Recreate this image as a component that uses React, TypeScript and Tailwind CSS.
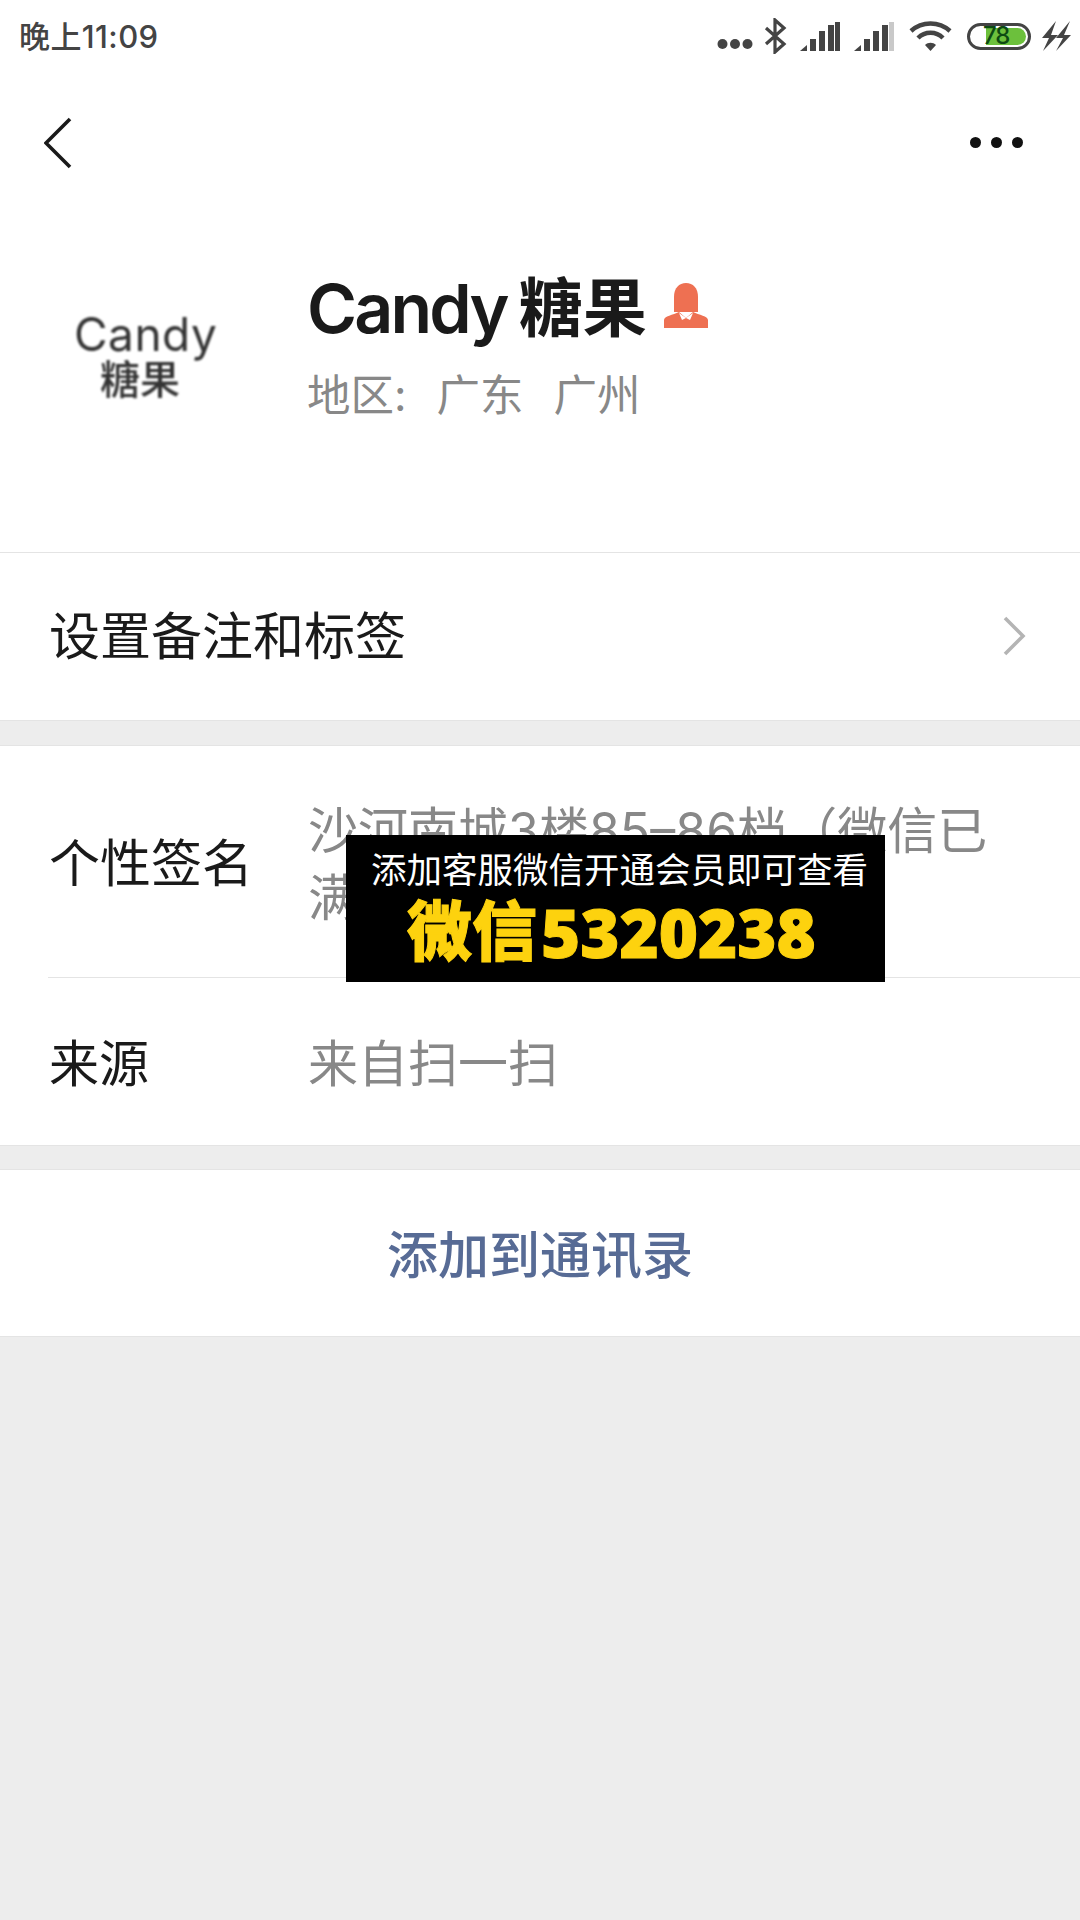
const FONT = "font-['Inter','Noto_Sans_CJK_SC',sans-serif]";

function SignalBars({ lastDim }: { lastDim?: boolean }) {
  return (
    <svg width="40" height="29" viewBox="0 0 40 29">
      <path d="M0 29 L7 23 V29 Z" fill="#444" />
      <rect x="10" y="17" width="6" height="12" fill="#444" />
      <rect x="19" y="9" width="6" height="20" fill="#444" />
      <rect x="28" y="3" width="6" height="26" fill="#444" />
      <rect x="35" y="0" width="5" height="29" fill={lastDim ? '#c9c9c9' : '#444'} />
    </svg>
  );
}

function StatusBar() {
  return (
    <div className="flex h-[72px] items-center justify-between pl-[19px] pr-[9px]">
      <span className="text-[31px] font-medium leading-none tracking-[0.4px] text-[#444]">晚上11:09</span>
      <div className="flex items-center">
        <svg width="36" height="12" viewBox="0 0 36 12" className="mt-[15px]">
          <circle cx="5.5" cy="6" r="5" fill="#444" />
          <circle cx="18" cy="6" r="5" fill="#444" />
          <circle cx="30.5" cy="6" r="5" fill="#444" />
        </svg>
        <svg width="24" height="36" viewBox="0 0 24 36" className="ml-[11px]">
          <path d="M2 10 L20 26 L11 34 V2 L20 10 L2 26" fill="none" stroke="#444" strokeWidth="3.2" />
        </svg>
        <div className="ml-[12px] flex items-center gap-[14px]">
          <SignalBars />
          <SignalBars lastDim />
        </div>
        <svg width="43" height="32" viewBox="0 0 43 32" className="ml-[15px]">
          <path d="M2 11 C13 1 30 1 41 11" fill="none" stroke="#444" strokeWidth="4.5" />
          <path d="M9 18 C16 11 27 11 34 18" fill="none" stroke="#444" strokeWidth="4.5" />
          <path d="M16 25 C19 22 24 22 27 25 L21.5 31 Z" fill="#444" />
        </svg>
        <div className="relative ml-[15px] h-[27px] w-[64px] rounded-full border-[3.5px] border-[#444] p-[2px]">
          <div className="ml-[14px] h-full rounded-r-full bg-[#6cc03c]" />
          <span className="absolute inset-y-0 left-[13px] flex items-center text-[24px] font-medium leading-none tracking-[-1px] text-[#0d4a12]">78</span>
        </div>
        <svg width="30" height="32" viewBox="0 0 30 32" className="ml-[10px]">
          <path d="M15 1 L1 18 L8 18 L2 31 L17 15 L10 15 Z" fill="#444" />
          <path d="M29 1 L15 18 L22 18 L15 31 L30 15 L23 15 Z" fill="#444" />
        </svg>
      </div>
    </div>
  );
}

function NavBar() {
  return (
    <div className="flex h-[142px] items-center justify-between pb-[1px] pl-[44px] pr-[57px]">
      <svg width="28" height="52" viewBox="0 0 28 52">
        <path d="M26 2 L2 26 L26 50" fill="none" stroke="#1a1a1a" strokeWidth="3.6" />
      </svg>
      <div className="flex gap-[10px]">
        <span className="size-[11px] rounded-full bg-[#111]" />
        <span className="size-[11px] rounded-full bg-[#111]" />
        <span className="size-[11px] rounded-full bg-[#111]" />
      </div>
    </div>
  );
}

function FemaleIcon() {
  return (
    <svg width="44" height="46" viewBox="0 0 44 46" className="ml-[17px] mt-[-6px]">
      <path d="M10 30 V15 C10 6 15 1 22 1 C29 1 34 6 34 15 V30 Z" fill="#ee7052" />
      <path d="M0 46 V38 C0 34 9 33 15 30 L22 36 L29 30 C35 33 44 34 44 38 V46 Z" fill="#ee7052" />
      <path d="M15 31 L22 36 L29 31 L26 38 L22 36 L18 38 Z" fill="#fff" />
    </svg>
  );
}

function Profile() {
  return (
    <div className="flex h-[339px] items-start border-b border-[#e4e4e4] pl-[74px]">
      <div className="mt-[96px] flex w-[233px] shrink-0 flex-col text-[#333] blur-[1.2px]">
        <span className="text-[46px] leading-[48px] tracking-[0.5px]">Candy</span>
        <span className="ml-[26px] mt-[1px] text-[40px] font-medium leading-[42px]">糖果</span>
      </div>
      <div className="mt-[54px] flex flex-col">
        <div className="flex items-center">
          <span className="text-[68px] font-semibold leading-[80px] tracking-[-2.8px] text-[#1a1a1a]">Candy</span>
          <span className="ml-[12px] text-[64px] font-bold leading-[80px] text-[#1a1a1a]">糖果</span>
          <FemaleIcon />
        </div>
        <div className="mt-[22px] flex gap-[30px] text-[43.5px] leading-[50px] text-[#888]">
          <span>地区:</span>
          <span>广东</span>
          <span>广州</span>
        </div>
      </div>
    </div>
  );
}

function TagsRow() {
  return (
    <div className="flex h-[168px] items-center justify-between border-b border-[#e4e4e4] pl-[49px] pr-[54px]">
      <span className="text-[51px] leading-none text-[#1a1a1a]">设置备注和标签</span>
      <svg width="23" height="40" viewBox="0 0 23 40" className="mt-[-1px]">
        <path d="M2 2 L20 20 L2 38" fill="none" stroke="#b4b4b4" strokeWidth="3.6" />
      </svg>
    </div>
  );
}

function Details() {
  return (
    <div className="border-y border-[#e4e4e4] bg-white">
      <div className="relative ml-[48px] flex h-[232px] items-center border-b border-[#e4e4e4] pt-[4px]">
        <span className="w-[260px] shrink-0 pl-[1px] text-[51px] leading-none text-[#1a1a1a]">个性签名</span>
        <p className="mt-[3px] w-[720px] pr-[30px] text-[50px] leading-[67px] text-[#888]">沙河南城3楼85–86档（微信已满</p>
        <div className="absolute left-[298px] top-[89px] flex h-[147px] w-[539px] flex-col bg-black pl-[25px]">
          <span className="mt-[14px] whitespace-nowrap text-[35.5px] leading-[44px] text-white">添加客服微信开通会员即可查看</span>
          <div className="ml-[36px] mt-[4px] flex items-center whitespace-nowrap font-black leading-[70px] text-[#fdd20e]">
            <span className="text-[65px] [-webkit-text-stroke:1px_#fdd20e]">微信</span>
            <span className="ml-[4px] font-['Open_Sans'] text-[67px] font-extrabold [-webkit-text-stroke:1px_#fdd20e]">5320238</span>
          </div>
        </div>
      </div>
      <div className="flex h-[167px] items-center pl-[49px] pt-[4px]">
        <span className="w-[259px] shrink-0 text-[50px] leading-none text-[#1a1a1a]">来源</span>
        <span className="text-[50px] leading-none text-[#888]">来自扫一扫</span>
      </div>
    </div>
  );
}

export default function App() {
  return (
    <div className={`flex h-[1920px] w-[1080px] flex-col overflow-hidden bg-[#ededed] ${FONT}`}>
      <div className="bg-white">
        <StatusBar />
        <NavBar />
        <Profile />
        <TagsRow />
      </div>
      <div className="mt-[24px]">
        <Details />
      </div>
      <div className="mt-[23px] flex h-[168px] items-center justify-center border-y border-[#e4e4e4] bg-white pt-[4px]">
        <span className="text-[51px] font-medium leading-none text-[#576b95]">添加到通讯录</span>
      </div>
    </div>
  );
}
